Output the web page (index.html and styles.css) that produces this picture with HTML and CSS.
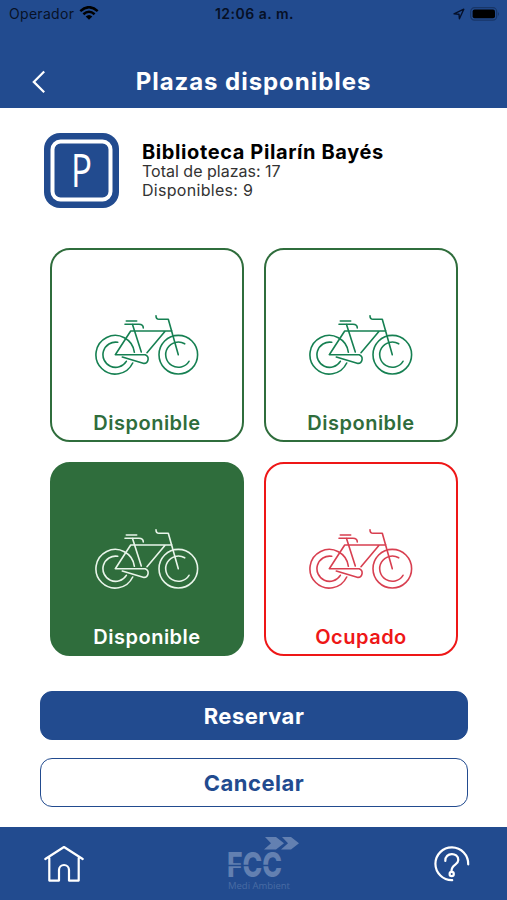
FILE: index.html
```
<!DOCTYPE html>
<html lang="es">
<head>
    <meta charset="UTF-8">
    <meta name="viewport" content="width=device-width, initial-scale=1.0">
    <title>Plazas disponibles</title>
    <link rel="stylesheet" href="styles.css">
</head>
<body>
    <!-- Dibujo de la bici, se reutiliza en cada plaza -->
    <svg class="defs">
        <symbol id="bike" viewBox="0 0 104 62">
            <path d="M39.4 38.3A19.3 19.3 0 1 0 37.7 49M22.7 28.3A12.6 12.6 0 1 0 31.3 47.3"/>
            <circle cx="83.3" cy="40.7" r="19.3"/>
            <path d="M89.7 29.8A12.6 12.6 0 1 0 94 47.3"/>
            <path d="M61 1.7Q61 5.3 64 5.3H73.3L83.3 40.7M77 17H35.7L20.3 40.7H50.2A4.5 4.5 0 0 1 49 49.4L27.3 43M70.3 17L52 38.7M46.3 38L37.5 10.5"/>
            <path d="M31.3 7H41.7M30 10.3H44Q48.3 10.3 48.3 14"/>
        </symbol>
    </svg>

    <header>
        <div class="status">
            <div class="operator">
                <span class="operator-name">Operador</span>
                <svg width="20" height="15" viewBox="0 0 20 15">
                    <path d="M1.3 5.1Q10-2.7 18.7 5.1M4.4 8.2Q10 3.2 15.6 8.2" fill="none" stroke="#000" stroke-width="2.5"/>
                    <path d="M6.7 10.5Q10 7.5 13.3 10.5L10 13.8Z"/>
                </svg>
            </div>
            <span class="time">12:06 a. m.</span>
            <div class="status-icons">
                <svg width="12" height="12" viewBox="0 0 12 12">
                    <path d="M1 5.8L10.8 1.2L6.4 10.8L6 6.2Z" fill="none" stroke="#061029" stroke-width="1.4" stroke-linejoin="round"/>
                </svg>
                <svg width="30" height="14" viewBox="0 0 30 14">
                    <rect x=".7" y=".7" width="26" height="12.4" rx="3.8" fill="none" stroke="#183668" stroke-width="1.2"/>
                    <rect x="2.6" y="2.6" width="22.4" height="8.7" rx="2"/>
                    <path d="M28 5Q30 7 28 9Z" fill="#183668"/>
                </svg>
            </div>
        </div>
        <div class="title-bar">
            <svg class="back" width="14" height="24" viewBox="0 0 14 24">
                <path d="M12.2 1.5L1.8 11.9L12.2 22.3"/>
            </svg>
            <h1>Plazas disponibles</h1>
        </div>
    </header>

    <main>
        <section class="station">
            <div class="parking">
                <svg class="parking-sign" width="75" height="75" viewBox="0 0 75 75">
                    <rect x="8.5" y="8.5" width="58" height="58" rx="8"/>
                    <text x="27" y="53.5" textLength="21" lengthAdjust="spacingAndGlyphs">P</text>
                </svg>
            </div>
            <div class="station-info">
                <h2>Biblioteca Pilarín Bayés</h2>
                <p class="total">Total de plazas: 17</p>
                <p class="free">Disponibles: 9</p>
            </div>
        </section>

        <section class="slots">
            <div class="slot">
                <svg class="bike"><use href="#bike"/></svg>
                <span>Disponible</span>
            </div>
            <div class="slot">
                <svg class="bike"><use href="#bike"/></svg>
                <span>Disponible</span>
            </div>
            <div class="slot selected">
                <svg class="bike"><use href="#bike"/></svg>
                <span>Disponible</span>
            </div>
            <div class="slot busy">
                <svg class="bike"><use href="#bike"/></svg>
                <span>Ocupado</span>
            </div>
        </section>

        <div class="actions">
            <button class="btn btn-primary">Reservar</button>
            <button class="btn">Cancelar</button>
        </div>
    </main>

    <footer>
        <svg class="nav-icon" width="40" height="38" viewBox="0 0 40 38">
            <path d="M1.3 14L20 2L38.7 14M5.3 13V35.6H15V25A5 5 0 0 1 25 25V35.6H34.7V13"/>
        </svg>
        <svg class="logo" width="74" height="56" viewBox="0 0 74 56">
            <path d="M37 1H48L56 7.2L48 13.5H36L43 7.2ZM54 1H63L71 7.2L63 13.5H53L60 7.2Z"/>
            <text class="logo-name" x="-1" y="41" textLength="55" lengthAdjust="spacingAndGlyphs">FCC</text>
            <path class="logo-cut" d="M0 29.5H56"/>
            <text class="logo-sub" x="0" y="53" textLength="62">Medi Ambient</text>
        </svg>
        <svg class="nav-icon" width="36" height="36" viewBox="0 0 36 36">
            <path d="M18.2 34.2A16.4 16.4 0 1 1 34.2 18.4"/>
            <path d="M11.3 15C10.8 6 24.3 5.8 24.3 14C24.3 19.2 17.5 18 17.5 25"/>
            <circle cx="17.7" cy="28" r="2.1"/>
        </svg>
    </footer>
</body>
</html>
```

FILE: styles.css
```
* {
    box-sizing: border-box;
}

body {
    margin: 0;
    height: 900px;
    display: flex;
    flex-direction: column;
    background-color: #fff;
    font-family: Inter, "Liberation Sans", sans-serif;
    color: #000;
    overflow: hidden;
}

h1, h2, p {
    margin: 0;
    white-space: nowrap;
}

.defs {
    display: none;
}

header {
    height: 108px;
    background-color: #224b8f;
}

.status {
    height: 27px;
    padding: 0 7px 0 9px;
    display: grid;
    grid-template-columns: 1fr auto 1fr;
    align-items: center;
}

.operator, .status-icons {
    display: flex;
    align-items: center;
    gap: 5px;
}

.operator {
    font-size: 14px;
    color: #081226;
}

.operator-name {
    letter-spacing: 0.3px;
}

.status-icons {
    justify-content: flex-end;
}

.time {
    font-size: 14px;
    font-weight: 600;
    letter-spacing: 0.5px;
    color: #061026;
}

.title-bar {
    height: 81px;
    padding: 28px 32px 0;
    display: grid;
    grid-template-columns: 14px 1fr 14px;
    align-items: center;
}

.back {
    fill: none;
    stroke: #fff;
    stroke-width: 2.2;
}

h1 {
    text-align: center;
    font-size: 24px;
    line-height: 30px;
    font-weight: 700;
    letter-spacing: 0.95px;
    color: #fff;
}

main {
    flex: 1;
    padding: 25px 39px 0 40px;
}

.station {
    height: 75px;
    padding-left: 4px;
    display: flex;
    gap: 23px;
}

.parking {
    width: 75px;
    height: 75px;
    border-radius: 16px;
    background-color: #224b8f;
}

.parking-sign rect {
    fill: none;
    stroke: #fff;
    stroke-width: 4;
}

.parking-sign text {
    font-family: "Open Sans", sans-serif;
    font-size: 45px;
    fill: #fff;
}

.station-info {
    padding-top: 10px;
    font-size: 16px;
    line-height: 19px;
    color: #333;
}

.station-info h2 {
    font-size: 20px;
    line-height: 19px;
    font-weight: 700;
    letter-spacing: 0.6px;
    color: #000;
}

.station-info .free {
    letter-spacing: 0.3px;
}

.slots {
    padding: 40px 10px 0;
    display: grid;
    grid-template-columns: 194px 194px;
    gap: 20px;
}

.slot {
    height: 194px;
    padding-top: 64px;
    display: flex;
    flex-direction: column;
    align-items: center;
    border: 2px solid #2f6d3c;
    border-radius: 20px;
    font-size: 20px;
    line-height: 24px;
    font-weight: 600;
    letter-spacing: 0.5px;
    color: #2f6d3c;
}

.slot span {
    margin-top: 35px;
}

.bike {
    width: 104px;
    height: 62px;
    margin-right: 1px;
    fill: none;
    stroke: #168052;
    stroke-width: 1.6;
    stroke-linecap: round;
    stroke-linejoin: round;
}

.selected {
    background-color: #2f6d3c;
    color: #fff;
}

.selected .bike {
    stroke: #e9f5ea;
}

.busy {
    border-color: #ee1717;
    color: #ee1717;
}

.busy .bike {
    stroke: #d83f50;
}

.actions {
    padding-top: 35px;
    display: flex;
    flex-direction: column;
    gap: 18px;
}

.btn {
    height: 49px;
    padding: 0;
    border: 1px solid #224b8f;
    border-radius: 12px;
    background-color: #fff;
    font-family: inherit;
    font-size: 22px;
    font-weight: 700;
    letter-spacing: 0.5px;
    color: #224b8f;
}

.btn-primary {
    background-color: #224b8f;
    color: #fff;
}

footer {
    height: 73px;
    padding: 0 37px 0 44px;
    display: flex;
    align-items: center;
    justify-content: space-between;
    background-color: #224b8f;
}

.nav-icon {
    fill: none;
    stroke: #fff;
    stroke-width: 2.2;
    stroke-linecap: round;
    stroke-linejoin: round;
}

.logo {
    margin-left: 12px;
    fill: #6380b1;
}

.logo-name {
    font-size: 34px;
    font-weight: 800;
}

.logo-cut {
    stroke: #224b8f;
    stroke-width: 1.3;
}

.logo-sub {
    font-family: "Open Sans", sans-serif;
    font-size: 9.5px;
    fill: #496ba4;
}
```
